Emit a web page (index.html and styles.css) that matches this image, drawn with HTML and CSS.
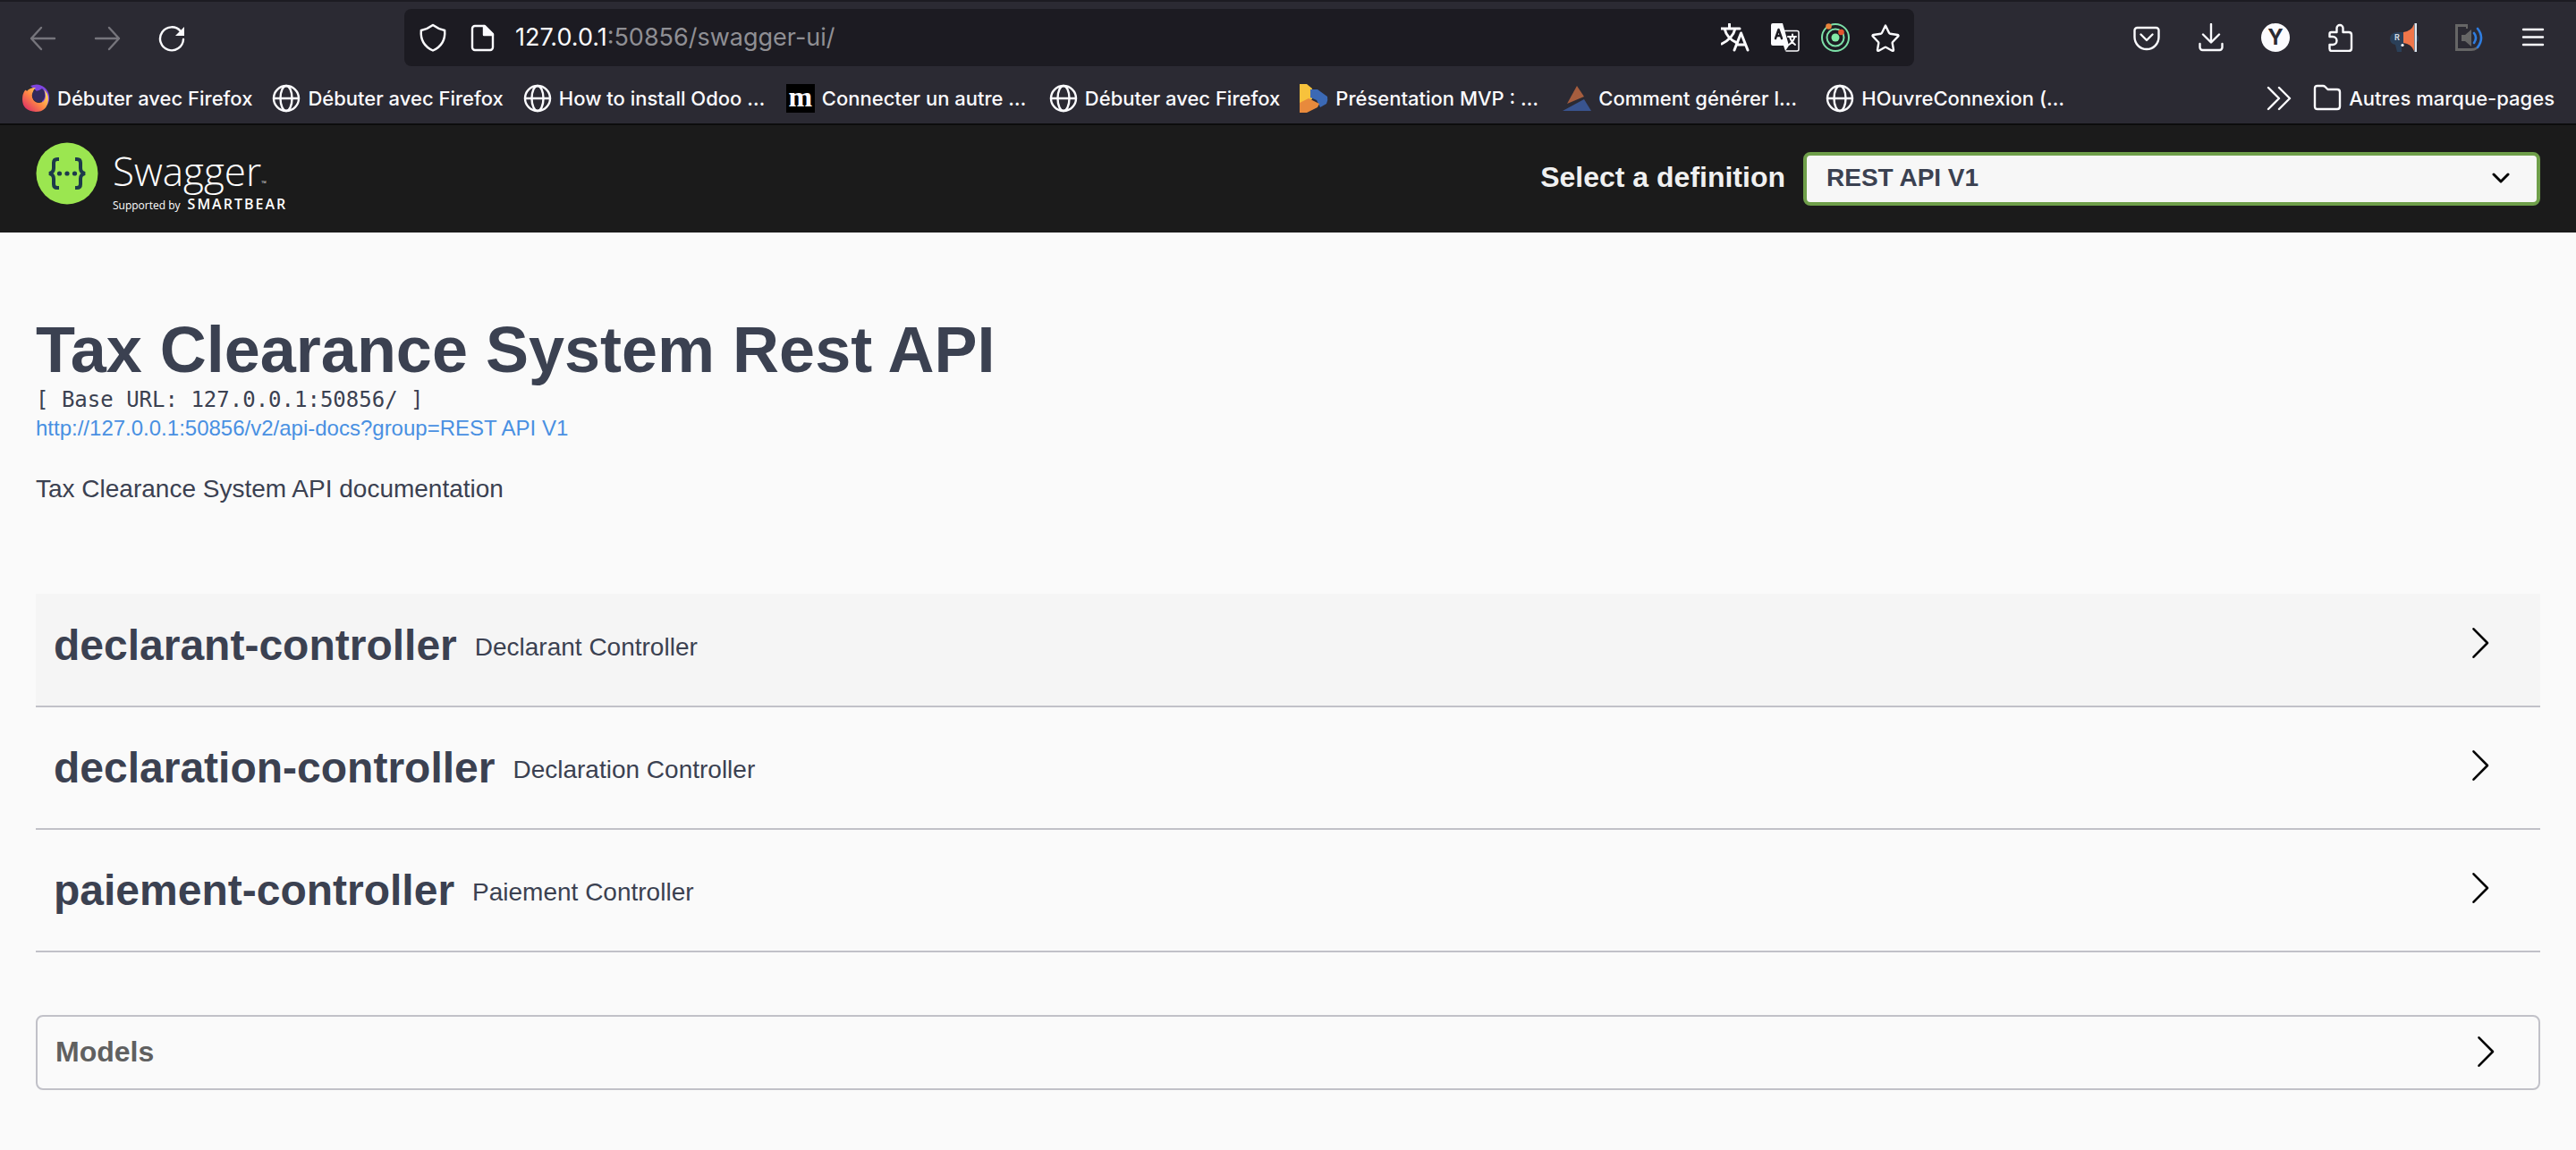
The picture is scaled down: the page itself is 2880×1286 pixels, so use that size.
FILE: index.html
```html
<!DOCTYPE html>
<html lang="fr">
<head>
<meta charset="utf-8">
<title>Swagger UI</title>
<link rel="stylesheet" href="styles.css">
</head>
<body>
<svg class="defs" aria-hidden="true">
  <symbol id="globe" viewBox="0 0 32 32"><g fill="none" stroke="currentColor" stroke-width="2.4"><circle cx="16" cy="16" r="14"/><ellipse cx="16" cy="16" rx="6.5" ry="14"/><path d="M2 16h28"/></g></symbol>
  <symbol id="chevron" viewBox="0 0 40 40"><path d="M11.500 4.300 27 20 11.500 35.700" fill="none" stroke="currentColor" stroke-width="2.600" stroke-linecap="round" stroke-linejoin="round"/></symbol>
</svg>
<header class="browser">
  <div class="toolbar">
    <nav class="tools" aria-label="Navigation">
      <button class="tool dim" aria-label="Précédent"><svg viewBox="0 0 32 32"><path d="M29 17H3M14 5 3 17l11 12" /></svg></button>
      <button class="tool dim" aria-label="Suivant"><svg viewBox="0 0 32 32"><path d="M3 17h26M18 5l11 12-11 12" /></svg></button>
      <button class="tool" aria-label="Actualiser"><svg viewBox="0 0 32 32"><path d="M29 18A13 13 0 1 1 26 9" /><path d="M30 4v10H20z" fill="currentColor" stroke="none"/></svg></button>
    </nav>
    <div class="address">
      <svg class="icon" viewBox="0 0 32 32"><path d="M16 2C12 5 7.500 7 2.800 8 2 18 6 26 16 30.500 26 26 30 18 29.200 8 24.500 7 20 5 16 2z" /></svg>
      <svg class="icon" viewBox="0 0 32 32"><path d="M7 3h11l9 9v15a3 3 0 0 1-3 3H7a3 3 0 0 1-3-3V6a3 3 0 0 1 3-3z"/><path d="M17 3v10h10z" fill="currentColor"/></svg>
      <p class="url">127.0.0.1<span class="path">:50856/swagger-ui/</span></p>
      <svg class="icon" viewBox="0 0 32 32"><path d="M0 6h21M9.500 1v5M4 6c2 8 7 13 14 16M16 6C14 14 9 19 1 23" stroke-width="3"/><path d="m15 30 7.500-19 7.500 19M18 24h9" stroke-width="3"/></svg>
      <svg class="icon" viewBox="0 0 32 32"><path d="M14 8.500h15q2 0 2 2V29q0 2-2 2H17" stroke-width="1.500"/><path d="M2 0h11l7 25-4 6-2-6H2q-2 0-2-2V2q0-2 2-2z" fill="currentColor" stroke="none"/><path d="M5 17 8.500 7 12 17M6.500 14h4" stroke="#1c1b22"/><path d="M19 15h9M24 12.500V15M21 15c1 4 3 7 6 9M26.500 15c-1 4-3 7-6.500 9" stroke-width="2"/></svg>
      <svg class="icon" viewBox="0 0 32 32"><g stroke="#7de0a8" stroke-width="2"><circle cx="16" cy="16" r="15"/><circle cx="16" cy="16" r="9.500"/></g><circle cx="16" cy="16" r="4.500" fill="#82eaa6" stroke="none"/><circle cx="8.500" cy="3.500" r="3.300" fill="#e8833a" stroke="none"/><circle cx="22.500" cy="10" r="3.300" fill="#e2542f" stroke="none"/></svg>
      <svg class="icon" viewBox="0 0 32 32"><path d="m16 2.500 4 8.300q.4.800 1.200.9l8.300 1.300q1.500.5.600 1.700l-6 6.300q-.5.600-.4 1.300l1.300 7.400q0 1.600-1.500 1L16.800 27q-.8-.4-1.600 0l-6.700 3.700q-1.500.6-1.500-1l1.300-7.400q.1-.7-.4-1.300l-6-6.300q-.9-1.200.6-1.700l8.300-1.300q.8-.1 1.200-.9z"/></svg>
    </div>
    <div class="tools">
      <button class="tool" aria-label="Pocket"><svg viewBox="0 0 32 32"><path d="M5.500 5h21a3 3 0 0 1 3 3v7.500a13.500 13.500 0 0 1-27 0V8a3 3 0 0 1 3-3z"/><path d="m9.500 12.500 6.500 6.500 6.500-6.500"/></svg></button>
      <button class="tool" aria-label="Téléchargements"><svg viewBox="0 0 32 32"><path d="M16 1v20M7 12.500l9 9 9-9M3.500 23v4a3 3 0 0 0 3 3h19a3 3 0 0 0 3-3v-4"/></svg></button>
      <button class="tool account" aria-label="Compte">Y</button>
      <button class="tool" aria-label="Extensions"><svg viewBox="0 0 32 32"><path d="M12.500 10V5.500a3.500 3.500 0 0 1 7 0V10H26q3 0 3 3v15q0 3-3 3H7q-2.500 0-2.500-2.500V24h3.500a4 4 0 0 0 0-9H4.500v-3q0-2 2-2z"/></svg></button>
      <button class="tool" aria-label="Annonces"><svg viewBox="0 0 32 32"><g stroke="none"><path d="M8 10h8v14h-3v8H8l-2-8Q0 23 0 17t8-7z" fill="#2b4059"/><path d="M29 13q3 0 3 4t-3 4z" fill="#2b4059"/><path d="M15 10q9-1 12-9v30q-3-8-12-9z" fill="#f0764a"/><path d="M27.500 0H30v32h-2.500z" fill="#dfe8f2"/><circle cx="14" cy="24.500" r="1.600" fill="#fff"/></g><text x="5" y="19" class="badge-letter">R</text></svg></button>
      <button class="tool" aria-label="Son"><svg viewBox="0 0 32 32"><g stroke="none" fill="#666"><path d="M1 1h14v5h-2V4H4v24h15q6 0 9-5-1 8-9 8H1z"/><path d="M8 13h4l7-6v19l-7-6H8z"/></g><path d="M22 11q4 5 0 11M26 6q8 10 0 21" stroke="#2f7de0" stroke-width="2.600"/></svg></button>
      <button class="tool" aria-label="Menu"><svg viewBox="0 0 32 32"><path d="M5 7h22M5 15.500h22M5 24h22"/></svg></button>
    </div>
  </div>
  <nav class="bookmarks" aria-label="Marque-pages">
    <a href="#"><svg class="icon" viewBox="0 0 32 32"><defs><linearGradient id="fox" x1=".9" y1=".2" x2=".2" y2=".9"><stop offset="0" stop-color="#ffdf5a"/><stop offset=".5" stop-color="#ff8a45"/><stop offset="1" stop-color="#e23b62"/></linearGradient></defs><g stroke="none"><path d="M10 2q9-4 16 2 6 5 5 14-2 8-7 8-1-15-14-24z" fill="#7f45e0"/><path d="M4 7q1-1 2 1 3-4 10-4-3 2-3 5-2 3-1 6 2 6 8 6 7-1 7-8 0-4-2-7 5 4 5 11-1 14-14 14Q1 30 1 17 1 11 4 7z" fill="url(#fox)"/><path d="M14 7q-3 3-1 9 3 5 8 4 6-2 5-9 0-4-3-6-5 4-9 2z" fill="#332a5c"/></g></svg><span>Débuter avec Firefox</span></a>
    <a href="#"><svg class="icon"><use href="#globe"/></svg><span>Débuter avec Firefox</span></a>
    <a href="#"><svg class="icon"><use href="#globe"/></svg><span class="cut">How to install Odoo …</span></a>
    <a href="#"><b class="icon m">m</b><span class="cut">Connecter un autre …</span></a>
    <a href="#"><svg class="icon"><use href="#globe"/></svg><span>Débuter avec Firefox</span></a>
    <a href="#"><svg class="icon" viewBox="0 0 32 32"><g stroke="none"><path d="M0 0h8l6 5v12L4 22H0z" fill="#f7c23c"/><path d="m12 6 8 0 11 8q1 4-1 8l-7 4-4-8-7-3z" fill="#3b69b5"/><path d="m0 21 10-5 12 6-2 4-12 6H0z" fill="#e88a3c"/></g></svg><span class="cut">Présentation MVP : …</span></a>
    <a href="#"><svg class="icon" viewBox="0 0 32 32"><g stroke="none"><path d="m16 2 8 12L5 22z" fill="#a65d3e"/><path d="m24 17 8 13H0z" fill="#39548f"/></g></svg><span class="cut">Comment générer l…</span></a>
    <a href="#"><svg class="icon"><use href="#globe"/></svg><span class="cut">HOuvreConnexion (…</span></a>
    <button class="more" aria-label="Plus de marque-pages"><svg class="icon" viewBox="0 0 32 32"><path d="m4 4 12 12L4 28M16 4l12 12-12 12"/></svg></button>
    <a href="#"><svg class="icon" viewBox="0 0 32 32"><path d="M5 2h6q1.500 0 2.500 1l3 3H27q3 0 3 3v16q0 3-3 3H5q-3 0-3-3V5q0-3 3-3z"/></svg><span>Autres marque-pages</span></a>
  </nav>
</header>
<div class="topbar">
  <a class="logo" href="#">
    <svg class="mark" viewBox="0 0 70 70"><circle cx="35" cy="35" r="34.500" fill="#9be650"/><g fill="none" stroke="#1d3a4a" stroke-width="4"><path d="M26 19h-2q-4 0-4 4v6q0 5-5 6 5 1 5 6v6q0 4 4 4h2M44 19h2q4 0 4 4v6q0 5 5 6-5 1-5 6v6q0 4-4 4h-2"/></g><g fill="#1d3a4a"><circle cx="26.500" cy="35" r="2.600"/><circle cx="35" cy="35" r="2.600"/><circle cx="43.500" cy="35" r="2.600"/></g></svg>
    <span class="words"><span class="name">Swagger<small>™</small></span><span class="by">Supported by <b>SMARTBEAR</b></span></span>
  </a>
  <form class="definition">
    <label for="definition">Select a definition</label>
    <div class="picker">
      <select id="definition"><option>REST API V1</option></select>
      <svg class="caret" viewBox="0 0 20 20"><path d="m2 5 8 8 8-8" fill="none" stroke="#000" stroke-width="3" stroke-linecap="round" stroke-linejoin="round"/></svg>
    </div>
  </form>
</div>
<main>
  <section class="info">
    <h1>Tax Clearance System Rest API</h1>
    <pre>[ Base URL: 127.0.0.1:50856/ ]</pre>
    <a href="#">http://127.0.0.1:50856/v2/api-docs?group=REST API V1</a>
    <p>Tax Clearance System API documentation</p>
  </section>
  <section class="tags">
    <button class="tag hovered"><strong>declarant-controller</strong><span>Declarant Controller</span><svg class="chevron"><use href="#chevron"/></svg></button>
    <button class="tag"><strong>declaration-controller</strong><span>Declaration Controller</span><svg class="chevron"><use href="#chevron"/></svg></button>
    <button class="tag"><strong>paiement-controller</strong><span>Paiement Controller</span><svg class="chevron"><use href="#chevron"/></svg></button>
  </section>
  <button class="models">Models<svg class="chevron"><use href="#chevron"/></svg></button>
</main>
</body>
</html>
```
FILE: styles.css
```css
* { box-sizing: border-box; }
body { margin: 0; background: #fafafa; color: #3b4151; font-family: "Liberation Sans", Arial, sans-serif; }
button { margin: 0; border: 0; padding: 0; background: none; color: inherit; font: inherit; }
a { color: inherit; text-decoration: none; }
.defs { display: none; }

.browser { border-top: 2px solid #1c1b22; border-bottom: 2px solid #0c0c0d; background: #2b2a33; color: #fbfbfe; font-family: Inter, sans-serif; }
.browser svg { display: block; fill: none; stroke: currentColor; stroke-width: 2.4; stroke-linecap: round; stroke-linejoin: round; }
.toolbar { display: flex; align-items: center; gap: 244px; padding: 8px 32px 0; }
.tools { display: flex; gap: 40px; }
.tool, .tool svg, .icon { flex: none; width: 32px; height: 32px; }
.dim { color: #76757c; }
.account { border-radius: 50%; background: #fbfbfe; color: #2b2a33; font-size: 24px; font-weight: 700; line-height: 32px; }
.badge-letter { fill: #cfd6de; stroke: none; font: 700 9px Inter, sans-serif; }
.address { display: flex; flex: 1; align-items: center; gap: 24px; height: 64px; padding: 0 16px; border-radius: 8px; background: #1c1b22; }
.url { flex: 1; margin: 0 0 0 -4px; font-size: 27px; line-height: 36px; }
.path { color: #8f8f94; }
.bookmarks { display: flex; align-items: center; gap: 22px; padding: 20px 24px 12px; font-size: 22px; font-weight: 500; line-height: 32px; white-space: nowrap; }
.bookmarks a { display: flex; align-items: center; gap: 8px; }
.cut { width: 232px; }
.more { margin-left: auto; }
.m { background: #000; font: 700 32px/28px "Liberation Serif", serif; text-align: center; }

.topbar { display: flex; align-items: center; justify-content: space-between; height: 120px; padding: 0 40px; background: #1b1b1b; color: #f0f0f0; }
.logo { display: flex; gap: 16px; color: #fff; font-family: "Open Sans", sans-serif; }
.mark { width: 70px; height: 70px; }
.words { display: flex; flex-direction: column; padding-top: 6px; }
.name { height: 52px; font-size: 44px; font-weight: 300; line-height: 52px; }
.name small { font-size: 8px; }
.by { display: flex; align-items: baseline; gap: 8px; font-size: 12px; line-height: 22px; }
.by b { font-size: 16px; font-weight: 600; letter-spacing: 2px; }
.definition { display: flex; align-items: center; gap: 20px; }
.definition label { padding-bottom: 4px; font-size: 32px; font-weight: 700; }
.picker { display: grid; align-items: center; width: 824px; }
.picker select { grid-area: 1 / 1; height: 60px; padding: 0 22px 4px; appearance: none; border: 4px solid #6f9f4a; border-radius: 8px; background: #f7f7f7; color: #3b4151; font: 700 28px "Liberation Sans", Arial, sans-serif; }
.caret { grid-area: 1 / 1; justify-self: end; width: 20px; height: 20px; margin-right: 34px; pointer-events: none; }

main { padding: 91px 40px 64px; }
.info { display: flex; flex-direction: column; align-items: flex-start; }
h1 { margin: 0; font-size: 72px; line-height: 80px; }
pre { margin: 0; font: 24px/32px "DejaVu Sans Mono", monospace; }
.info a { color: #4990e2; font-size: 24px; line-height: 32px; }
.info p { margin: 36px 0 0; font-size: 28px; line-height: 32px; }
.tags { display: flex; flex-direction: column; gap: 10px; margin-top: 101px; }
.tag { display: flex; align-items: center; gap: 20px; padding: 28px 40px 37px 20px; border-bottom: 2px solid #c1c1c8; line-height: 56px; }
.tag strong { font-size: 48px; }
.tag span { padding-top: 4px; font-size: 28px; }
.chevron { width: 40px; height: 40px; margin-left: auto; color: #000; }
.tag .chevron { margin-bottom: 6px; margin-right: 6px; }
.hovered { background: #f5f5f5; }
.models { display: flex; align-items: center; width: 100%; height: 84px; margin-top: 70px; padding: 0 38px 2px 20px; border: 2px solid #c1c1c8; border-radius: 8px; color: #606060; font-size: 32px; font-weight: 700; }
```
